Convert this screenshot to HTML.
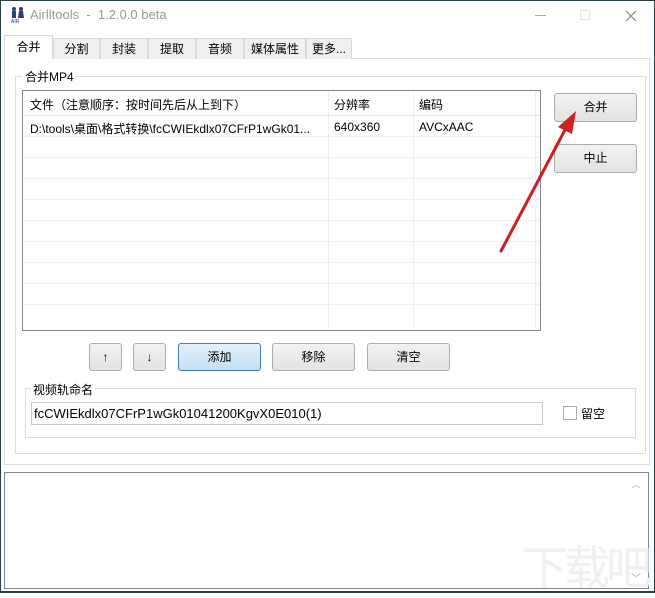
<!DOCTYPE html><html><head><meta charset="utf-8"><style>
*{box-sizing:border-box;margin:0;padding:0}
body{width:655px;height:593px;overflow:hidden;background:#fff;font-family:"Liberation Sans","Noto Sans CJK SC",sans-serif;font-size:12px;color:#000;position:relative}
.a{position:absolute}
.btn{position:absolute;border:1px solid #adadad;border-radius:3px;background:linear-gradient(#f2f2f2,#e3e3e3);text-align:center;font-size:12px}
.tab{position:absolute;top:38px;height:21px;border:1px solid #d9d9d9;border-bottom:none;background:#f0f0f0;font-size:12px;line-height:20px;text-align:center}
.hl{position:absolute;left:23px;width:517px;height:1px;background:#f0f0f0}
</style></head><body>
<div class="a" style="left:0;top:0;width:1px;height:593px;background:#2c3e45"></div>
<div class="a" style="right:0;top:0;width:1px;height:593px;background:#2c3e45"></div>
<div class="a" style="left:0;bottom:0;width:655px;height:2px;background:#2c3e45"></div>
<div class="a" style="left:0;top:0;width:655px;height:1px;background:#2c3e45"></div>
<svg class="a" style="left:10px;top:6px" width="16" height="18"><circle cx="4" cy="3" r="2" fill="#2a4070"/><circle cx="11" cy="3" r="2" fill="#2a4070"/><rect x="2" y="5" width="4" height="7" fill="#2a4070"/><path d="M9 5h4l1 7H8z" fill="#2a4070"/><text x="1" y="17" font-size="5" fill="#2a4070" font-family="Liberation Sans">AIR</text></svg>
<div class="a" style="left:30px;top:7px;font-size:13px;color:#999">Airlltools &nbsp;- &nbsp;1.2.0.0 beta</div>
<div class="a" style="left:535px;top:15px;width:11px;height:1px;background:#aaa"></div>
<div class="a" style="left:580px;top:10px;width:10px;height:10px;border:1px solid #e3e3e3"></div>
<svg class="a" style="left:625px;top:10px" width="12" height="12"><path d="M1 1L11 11M11 1L1 11" stroke="#888" stroke-width="1.2"/></svg>
<div class="a" style="left:4px;top:58px;width:646px;height:407px;border:1px solid #dcdcdc;background:#fff"></div>
<div class="tab" style="left:53px;width:47px">分割</div>
<div class="tab" style="left:100px;width:48px">封装</div>
<div class="tab" style="left:148px;width:48px">提取</div>
<div class="tab" style="left:196px;width:48px">音频</div>
<div class="tab" style="left:244px;width:62px">媒体属性</div>
<div class="tab" style="left:306px;width:46px">更多...</div>
<div class="tab" style="left:4px;top:35px;width:49px;height:24px;background:#fff;line-height:22px">合并</div>
<div class="a" style="left:15px;top:76px;width:631px;height:378px;border:1px solid #dcdcdc"></div>
<div class="a" style="left:22px;top:68px;background:#fff;padding:0 3px">合并MP4</div>
<div class="a" style="left:22px;top:90px;width:519px;height:241px;border:1px solid #828790;background:#fff"></div>
<div class="a" style="left:328px;top:92px;width:1px;height:237px;background:#f0f0f0"></div>
<div class="a" style="left:413px;top:92px;width:1px;height:237px;background:#f0f0f0"></div>
<div class="a" style="left:535px;top:92px;width:1px;height:237px;background:#f0f0f0"></div>
<div class="hl" style="top:115px;background:#e5e5e5"></div>
<div class="hl" style="top:136px"></div><div class="hl" style="top:157px"></div><div class="hl" style="top:178px"></div><div class="hl" style="top:199px"></div><div class="hl" style="top:220px"></div><div class="hl" style="top:241px"></div><div class="hl" style="top:262px"></div><div class="hl" style="top:283px"></div><div class="hl" style="top:304px"></div>
<div class="a" style="left:30px;top:96px">文件（注意顺序：按时间先后从上到下）</div>
<div class="a" style="left:334px;top:96px">分辨率</div>
<div class="a" style="left:419px;top:96px">编码</div>
<div class="a" style="left:30px;top:120px;width:297px;white-space:nowrap;overflow:hidden">D:\tools\桌面\格式转换\fcCWIEkdlx07CFrP1wGk01...</div>
<div class="a" style="left:334px;top:120px">640x360</div>
<div class="a" style="left:419px;top:120px">AVCxAAC</div>
<div class="btn" style="left:554px;top:93px;width:83px;height:29px;line-height:27px">合并</div>
<div class="btn" style="left:554px;top:144px;width:83px;height:29px;line-height:27px">中止</div>
<div class="btn" style="left:89px;top:343px;width:33px;height:28px;line-height:26px">↑</div>
<div class="btn" style="left:133px;top:343px;width:33px;height:28px;line-height:26px">↓</div>
<div class="btn" style="left:178px;top:343px;width:83px;height:28px;line-height:26px;background:linear-gradient(#e5f1fb,#c4e0f3);border-color:#3c7fb1">添加</div>
<div class="btn" style="left:272px;top:343px;width:83px;height:28px;line-height:26px">移除</div>
<div class="btn" style="left:367px;top:343px;width:83px;height:28px;line-height:26px">清空</div>
<div class="a" style="left:25px;top:388px;width:611px;height:50px;border:1px solid #dcdcdc"></div>
<div class="a" style="left:31px;top:381px;background:#fff;padding:0 2px">视频轨命名</div>
<div class="a" style="left:31px;top:402px;width:512px;height:23px;border:1px solid #c8c8c8;padding:3px 2px;font-size:13px">fcCWIEkdlx07CFrP1wGk01041200KgvX0E010(1)</div>
<div class="a" style="left:563px;top:406px;width:14px;height:14px;border:1px solid #aaa"></div>
<div class="a" style="left:581px;top:405px">留空</div>
<div class="a" style="left:4px;top:472px;width:645px;height:117px;border:1px solid #828790"></div>
<div class="a" style="left:631px;top:476px;font-size:10px;color:#aaa">︿</div>
<div class="a" style="left:631px;top:570px;font-size:10px;color:#aaa">﹀</div>
<div class="a" style="left:522px;top:532px;font-size:46px;color:#f0f0f0;letter-spacing:-4px">下载吧</div>
<svg class="a" style="left:0;top:0" width="655" height="593"><line x1="501" y1="251" x2="566" y2="128" stroke="#c82020" stroke-width="3" stroke-linecap="round"/><path d="M576 111 L558 127 L572 134 Z" fill="#d02020"/></svg>
</body></html>
